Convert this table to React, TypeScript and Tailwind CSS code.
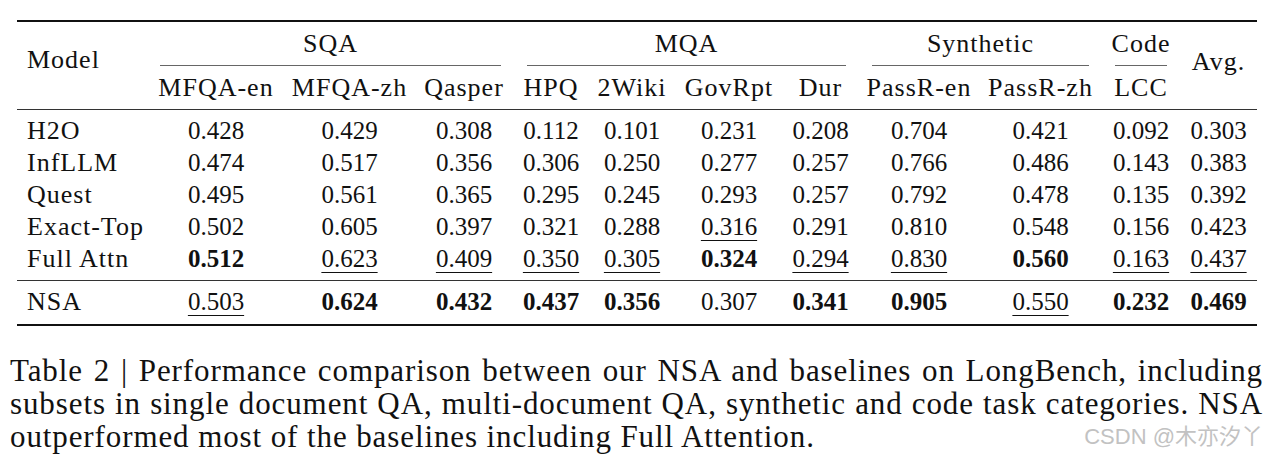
type Cell = { v: string; b?: boolean; u?: boolean };

const cols = "grid grid-cols-[130px_138px_129px_100px_74px_88px_106px_77px_120px_123px_78px_77px]";

const parse = (s: string): Cell[] =>
  s.split(" ").map((t) => {
    // "*" = fett, "_" = unterstrichen
    if (t.startsWith("*")) return { v: t.slice(1), b: true };
    if (t.startsWith("_")) return { v: t.slice(1), u: true };
    return { v: t };
  });

const rows: { model: string; cells: Cell[] }[] = [
  { model: "H2O", cells: parse("0.428 0.429 0.308 0.112 0.101 0.231 0.208 0.704 0.421 0.092 0.303") },
  { model: "InfLLM", cells: parse("0.474 0.517 0.356 0.306 0.250 0.277 0.257 0.766 0.486 0.143 0.383") },
  { model: "Quest", cells: parse("0.495 0.561 0.365 0.295 0.245 0.293 0.257 0.792 0.478 0.135 0.392") },
  { model: "Exact-Top", cells: parse("0.502 0.605 0.397 0.321 0.288 _0.316 0.291 0.810 0.548 0.156 0.423") },
  { model: "Full Attn", cells: parse("*0.512 _0.623 _0.409 _0.350 _0.305 *0.324 _0.294 _0.830 *0.560 _0.163 _0.437") },
];

const nsa = { model: "NSA", cells: parse("_0.503 *0.624 *0.432 *0.437 *0.356 0.307 *0.341 *0.905 _0.550 *0.232 *0.469") };

const subHeads = ["MFQA-en", "MFQA-zh", "Qasper", "HPQ", "2Wiki", "GovRpt", "Dur", "PassR-en", "PassR-zh", "LCC"];

const label = "text-[26px] tracking-[1px]";

function Row({ model, cells }: { model: string; cells: Cell[] }) {
  return (
    <div className={`${cols} h-8 items-center`}>
      <div className={`pl-[10px] ${label}`}>{model}</div>
      {cells.map((c, i) => (
        <div key={i} className="text-center">
          <span
            className={
              (c.b ? "font-bold " : "") +
              (c.u ? "underline decoration-1 underline-offset-[5px]" : "")
            }
          >
            {c.v}
          </span>
        </div>
      ))}
    </div>
  );
}

export default function App() {
  return (
    <div
      className="h-[469px] w-[1280px] overflow-hidden bg-white pt-[20px] text-[#111]"
      style={{ fontFamily: '"Liberation Serif", "Times New Roman", serif' }}
    >
      {/* Tabelle */}
      <div className="ml-[17px] w-[1240px] text-[25px] leading-[32px]">
        <div className="h-[2px] bg-[#111]" />
        <div className={`${cols} grid-rows-[44px_43px]`}>
          <div className={`row-span-2 flex items-center pb-[11px] pl-[10px] ${label}`}>Model</div>
          <div className={`col-span-3 mx-[13px] flex items-center justify-center border-b border-[#666] ${label}`}>SQA</div>
          <div className={`col-span-4 mx-[13px] flex items-center justify-center border-b border-[#666] ${label}`}>MQA</div>
          <div className={`col-span-2 mx-[13px] flex items-center justify-center border-b border-[#666] ${label}`}>Synthetic</div>
          <div className={`mx-[13px] flex items-center justify-center border-b border-[#666] ${label}`}>Code</div>
          <div className={`row-span-2 flex items-center justify-center pb-[7px] ${label}`}>Avg.</div>
          {subHeads.map((h) => (
            <div key={h} className={`flex items-center justify-center ${label}`}>
              {h}
            </div>
          ))}
        </div>
        <div className="h-px bg-[#333]" />
        <div className="pb-[5px] pt-[5px]">
          {rows.map((r) => (
            <Row key={r.model} {...r} />
          ))}
        </div>
        <div className="h-px bg-[#333]" />
        <div className="pb-[6px] pt-[5px]">
          <Row {...nsa} />
        </div>
        <div className="h-[2px] bg-[#111]" />
      </div>

      {/* Bildunterschrift */}
      <div className="mt-[28px] w-[1263px] pl-[10px] text-[31px] leading-[33px] tracking-[0.9px]">
        <div className="text-justify [text-align-last:justify]">
          Table 2 | Performance comparison between our NSA and baselines on LongBench, including
        </div>
        <div className="text-justify [text-align-last:justify]">
          subsets in single document QA, multi-document QA, synthetic and code task categories. NSA
        </div>
        <div className="flex items-center justify-between">
          <span>outperformed most of the baselines including Full Attention.</span>
          <span
            className="text-[22px] tracking-normal text-[#c2c2c2]"
            style={{ fontFamily: '"Liberation Sans", "Noto Sans CJK SC", sans-serif' }}
          >
            CSDN @木亦汐丫
          </span>
        </div>
      </div>
    </div>
  );
}
